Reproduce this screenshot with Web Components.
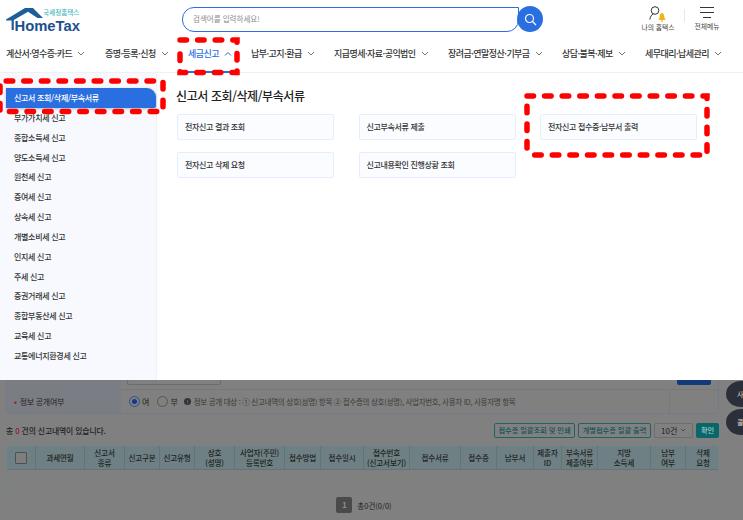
<!DOCTYPE html>
<html lang="ko">
<head>
<meta charset="utf-8">
<title>HomeTax</title>
<style>
  html, body { margin: 0; padding: 0; background: #fff; }
  body { width: 743px; height: 520px; overflow: hidden; position: relative;
         font-family: "Noto Sans CJK KR", "Noto Sans", sans-serif; color: #222; }
</style>
</head>
<body>
<ht-header></ht-header>
<ht-megamenu></ht-megamenu>
<ht-backdrop></ht-backdrop>
<ht-marks></ht-marks>

<script>
const FONT = '"Noto Sans CJK KR", "Noto Sans", sans-serif';

// top bar: logo, search, my hometax, all menu + the nav row
class HtHeader extends HTMLElement {
    constructor() {
        super();
        this.attachShadow({ mode: 'open' });
    }
    connectedCallback() {
        const nav = [
            ['계산서·영수증·카드', 99, false],
            ['증명·등록·신청', 83, false],
            ['세금신고', 63, true],
            ['납부·고지·환급', 83, false],
            ['지급명세·자료·공익법인', 114, false],
            ['장려금·연말정산·기부금', 114, false],
            ['상담·불복·제보', 83, false],
            ['세무대리·납세관리', 92, false]
        ];
        const items = nav.map(n => `
            <a class="${n[2] ? 'on' : ''}" style="width:${n[1]}px"><span>${n[0]}</span>
              <svg width="8" height="5" viewBox="0 0 8 5"><path d="${n[2] ? 'M1 4.500 4 1.500 7 4.500' : 'M1 1 4 4 7 1'}" fill="none" stroke="currentColor" stroke-width="1"/></svg>
            </a>`).join('');
        this.shadowRoot.innerHTML = `
        <style>
          :host { display: block; height: 73px; background: #fff; border-bottom: 1px solid #eef0f3; box-sizing: border-box; font-family: ${FONT}; }
          .top { display: flex; height: 38px; align-items: flex-start; }
          .logo { width: 182px; padding: 7px 0 0 6px; box-sizing: border-box; flex: none; }
          .logo svg { display: block; }
          .search { width: 337px; height: 25px; margin-top: 7px; border: 1.6px solid #2a6fe0; border-radius: 12px 0 12px 12px; box-sizing: border-box;
                    font-size: 7.500px; line-height: 21px; color: #8a8a8a; padding-left: 10px; flex: none; }
          .btn { width: 26px; height: 26px; margin: 6px 0 0 -2px; border-radius: 50%; background: #2a6fe0; flex: none;
                 display: flex; align-items: center; justify-content: center; }
          .my { margin-left: 96px; width: 38px; text-align: center; font-size: 6.800px; color: #444; flex: none; padding-top: 6px; line-height: 9px; white-space: nowrap; }
          .sep { width: 1px; height: 13px; background: #e5e7ea; margin: 9px 0 0 7px; flex: none; }
          .all { margin-left: 5px; width: 34px; text-align: center; font-size: 6.800px; color: #444; flex: none; padding-top: 7px; line-height: 9px; white-space: nowrap; }
          .my svg { display: block; margin: 0 auto 1px; }
          .all svg { display: block; margin: 0 auto 3px; }
          nav { display: flex; padding-left: 6px; height: 31px; align-items: center; white-space: nowrap; font-size: 9px; color: #333; }
          nav a { display: flex; flex: none; align-items: center; gap: 5px; font-weight: 500; letter-spacing: -.55px; position: relative; }
          nav a svg { color: #777; flex: none; }
          nav a.on, nav a.on svg { color: #2a6fe0; }
          nav a.on::after { content: ""; position: absolute; left: 0; width: 43px; top: 24px; height: 1.500px; background: #2a6fe0; }
        </style>
        <div class="top">
          <div class="logo">
            <svg width="76" height="26" viewBox="0 0 76 26">
              <path d="M0 12.500 19 1h8l10 10h-5.500L22 4.800 7.800 13v10H5.600V13.500H0z" fill="#1d5d99"/>
              <text x="37" y="8.200" font-size="6.600" font-weight="500" fill="#45b5c4" font-family='${FONT}'>국세청홈택스</text>
              <text x="8.500" y="24" font-size="15" font-weight="700" fill="#1d4f8f" font-family="Liberation Sans" textLength="65.500" lengthAdjust="spacingAndGlyphs">HomeTax</text>
            </svg>
          </div>
          <div class="search">검색어를 입력하세요!</div>
          <div class="btn"><svg width="13" height="13" viewBox="0 0 13 13"><circle cx="5.500" cy="5.500" r="4" fill="none" stroke="#fff" stroke-width="1.200"/><path d="M8.500 8.500 12 12" stroke="#fff" stroke-width="1.300"/></svg></div>
          <div class="my">
            <svg width="18" height="16" viewBox="0 0 18 16">
              <circle cx="6" cy="4.500" r="3.800" fill="none" stroke="#333" stroke-width="1"/>
              <path d="M.8 13.500c.5-3 2-4.800 3.500-5.500" fill="none" stroke="#333" stroke-width="1"/>
              <path d="M9.500 14c0-1 1.200-1 1.200-3.700 0-2 1.300-3.300 2.300-3.300s2.300 1.300 2.300 3.300c0 2.700 1.200 2.700 1.200 3.700z" fill="#f1b416"/>
              <rect x="12" y="14.500" width="2" height="1.200" fill="#f1b416"/>
            </svg>나의 홈택스</div>
          <div class="sep"></div>
          <div class="all">
            <svg width="14" height="12" viewBox="0 0 14 12"><path d="M0 .5h14M0 5.500h14M3 10.500h8" stroke="#333" stroke-width="1"/></svg>전체메뉴</div>
        </div>
        <nav>${items}</nav>`;
    }
}

// the open dropdown panel
class HtMegamenu extends HTMLElement {
    constructor() {
        super();
        this.attachShadow({ mode: 'open' });
    }
    connectedCallback() {
        const side = ['부가가치세 신고', '종합소득세 신고', '양도소득세 신고', '원천세 신고', '증여세 신고', '상속세 신고',
            '개별소비세 신고', '인지세 신고', '주세 신고', '증권거래세 신고', '종합부동산세 신고', '교육세 신고', '교통에너지환경세 신고'];
        const cards = ['전자신고 결과 조회', '신고부속서류 제출', '전자신고 접수증·납부서 출력', '전자신고 삭제 요청', '신고내용확인 진행상황 조회'];
        this.shadowRoot.innerHTML = `
        <style>
          :host { display: flex; height: 307px; background: #fff; font-family: ${FONT}; position: relative; z-index: 2; }
          aside { width: 157px; background: #f7f9fe; border-right: 1px solid #eef1f8; box-sizing: border-box; padding-top: 15px; flex: none; }
          .active { margin-left: 6px; height: 20px; background: #2a6fe0; color: #fff; border-radius: 0 9px 2px 0; font-size: 8px; letter-spacing: -.33px; line-height: 20px; padding-left: 8px; font-weight: 500; box-shadow: 0 1px 3px rgba(40,70,130,.35); }
          .item { font-size: 8px; letter-spacing: -.3px; height: 19.830px; line-height: 19.830px; padding-left: 14px; color: #333; font-weight: 500; }
          main { flex: 1; padding: 14px 0 0 20px; }
          h2 { margin: 0 0 9px -1px; font-size: 12px; letter-spacing: -.4px; font-weight: 500; line-height: 18px; color: #222; }
          .grid { display: grid; grid-template-columns: repeat(3, 157px); column-gap: 24.500px; row-gap: 12px; }
          .card { height: 26px; background: #fbfcff; border: 1px solid #e6edfb; border-radius: 2px; box-sizing: border-box; font-size: 8px; letter-spacing: -.35px; line-height: 24px; padding-left: 7px; color: #333; font-weight: 500; }
        </style>
        <aside>
          <div class="active">신고서 조회/삭제/부속서류</div>
          ${side.map(s => `<div class="item">${s}</div>`).join('')}
        </aside>
        <main>
          <h2>신고서 조회/삭제/부속서류</h2>
          <div class="grid">${cards.map(c => `<div class="card">${c}</div>`).join('')}</div>
        </main>`;
    }
}

// dimmed page under the menu: the search form tail, the buttons and the table
class HtBackdrop extends HTMLElement {
    constructor() {
        super();
        this.attachShadow({ mode: 'open' });
    }
    connectedCallback() {
        const heads = [['과세연월', 49], ['신고서<br>종류', 40], ['신고구분', 35], ['신고유형', 35], ['상호<br>(성명)', 40], ['사업자(주민)<br>등록번호', 50],
            ['접수방법', 36], ['접수일시', 43], ['접수번호<br>(신고서보기)', 46], ['접수서류', 51], ['접수증', 36], ['납부서', 37], ['제출자<br>ID', 28],
            ['부속서류<br>제출여부', 36], ['지방<br>소득세', 53], ['납부<br>여부', 35], ['삭제<br>요청', 35]];
        this.shadowRoot.innerHTML = `
        <style>
          :host { display: block; height: 140px; background: #808080; font-family: ${FONT}; color: #1f1f1f; position: relative; font-size: 8px; overflow: hidden; }
          .form { margin-left: 6px; width: 713px; height: 34px; border: 1px solid #767a88; border-top: 0; border-radius: 0 0 5px 5px; box-sizing: border-box;
                  display: grid; grid-template-columns: 114px 548px 1fr; grid-template-rows: 9px 1fr; overflow: hidden; }
          .lbl { background: #7b7d84; }
          .lbl.txt { padding-left: 7px; display: flex; align-items: center; gap: 3px; letter-spacing: -.3px; }
          .lbl i { color: #9c1a2c; font-style: normal; font-weight: 700; }
          .inp { width: 94px; height: 5px; margin-left: 6px; border: 1px solid #6c6c6c; border-top: 0; border-radius: 0 0 2px 2px; box-sizing: border-box; }
          .blue { width: 34px; height: 5px; margin-left: 8px; background: #123a7a; border-radius: 0 0 2px 2px; }
          .val { display: flex; align-items: center; padding-left: 8px; white-space: nowrap; border-top: 1px solid #787878; }
          .end { border-top: 1px solid #787878; border-left: 1px solid #787878; }
          .radio { width: 11px; height: 11px; border: 1px solid #555; border-radius: 50%; box-sizing: border-box; flex: none; margin-right: 2px; }
          .radio.on { border-color: #2c4f90; position: relative; }
          .radio.on::after { content: ""; position: absolute; inset: 2px; background: #123a8c; border-radius: 50%; }
          .pick { margin-right: 8px; }
          .pick.last { margin-right: 6px; }
          .info { font-size: 7.500px; letter-spacing: -.3px; color: #3a3a3a; display: flex; align-items: center; gap: 3px; }
          .info b { width: 7px; height: 7px; border-radius: 50%; background: #333; color: #808080; font-size: 5px; line-height: 7px; text-align: center; }
          .row { display: flex; height: 31px; align-items: center; margin-left: 6px; width: 713px; gap: 3px; padding-top: 1px; box-sizing: border-box; }
          .count { flex: 1; font-weight: 500; font-size: 7.800px; letter-spacing: -.1px; }
          .count em { color: #8c1a1a; font-style: normal; }
          .tbtn { height: 15px; border: 1px solid #1f6368; border-radius: 2px; color: #0f5357; font-size: 7.200px; line-height: 13px; text-align: center; box-sizing: border-box; font-weight: 500; white-space: nowrap; }
          .sel { width: 39px; height: 15px; border: 1px solid #6d6d6d; border-radius: 2px; font-size: 8px; padding: 0 6px; box-sizing: border-box; display: flex; align-items: center; justify-content: space-between; }
          .ok { background: #0b666a; color: #9cc; border: 0; line-height: 15px; }
          .tbl { width: 713px; margin-left: 6px; border: 1px solid #758585; border-radius: 2px; box-sizing: border-box; height: 45px; }
          .hd { display: flex; height: 23px; background: #6e8083; border-bottom: 1px solid #617576; box-sizing: content-box; }
          .hd div { box-sizing: border-box; border-left: 1px solid #617576; display: flex; align-items: center; justify-content: center; text-align: center; font-size: 7.500px; line-height: 9.500px; font-weight: 500; white-space: nowrap; letter-spacing: -.1px; flex: none; }
          .hd div:first-child { border-left: 0; }
          .chk { width: 10px; height: 10px; background: #7e7e7e; border: 1px solid #505050; border-radius: 1px; }
          .pg { display: flex; justify-content: center; align-items: center; gap: 5px; width: 713px; margin: 7px 0 0 6px; font-size: 7.500px; padding-left: 3px; box-sizing: border-box; }
          .pg b { width: 16px; height: 16px; background: #4a4a4a; color: #909090; text-align: center; line-height: 16px; border-radius: 2px; }
          .side { position: absolute; left: 726px; width: 30px; height: 26px; border-radius: 50%; background: #2a2f3a; color: #ddd; font-size: 7px; line-height: 26px; padding-left: 11px; box-sizing: border-box; }
        </style>
        <div class="form">
          <div class="lbl"></div>
          <div><div class="inp"></div></div>
          <div><div class="blue"></div></div>
          <div class="lbl txt"><i>•</i> 정보 공개여부</div>
          <div class="val">
            <span class="radio on"></span><span class="pick">여</span>
            <span class="radio"></span><span class="pick last">부</span>
            <span class="info"><b>!</b> 정보 공개 대상 : ① 신고내역의 상호(성명) 항목 ② 접수증의 상호(성명), 사업자번호, 사용자 ID, 사용자명 항목</span>
          </div>
          <div class="end"></div>
        </div>
        <div class="row">
          <span class="count">총 <em>0</em> 건의 신고내역이 있습니다.</span>
          <span class="tbtn" style="width:81px">접수증 일괄조회 및 인쇄</span>
          <span class="tbtn" style="width:73px">개별접수증 일괄 출력</span>
          <span class="sel">10건<svg width="6" height="4" viewBox="0 0 6 4"><path d="M1 1 3 3 5 1" fill="none" stroke="#444" stroke-width=".9"/></svg></span>
          <span class="tbtn ok" style="width:23px">확인</span>
        </div>
        <div class="tbl">
          <div class="hd">
            <div style="width:28px"><span class="chk"></span></div>
            ${heads.map(h => `<div style="width:${h[1]}px">${h[0]}</div>`).join('')}
          </div>
        </div>
        <div class="pg"><b>1</b><span>총0건(0/0)</span></div>
        <div class="side" style="top:1px">사</div>
        <div class="side" style="top:29px">콜</div>`;
    }
}

// red dashed annotations drawn over the screenshot
class HtMarks extends HTMLElement {
    constructor() {
        super();
        this.attachShadow({ mode: 'open' });
    }
    connectedCallback() {
        this.shadowRoot.innerHTML = `
        <style>
          :host { display: block; position: absolute; left: 0; top: 0; width: 743px; height: 520px; pointer-events: none; z-index: 5; }
          svg { display: block; }
          path { fill: none; stroke: #f00; stroke-width: 5.500; stroke-linecap: round; stroke-dasharray: 6.500 11.100; }
        </style>
        <svg width="743" height="520">
          <path d="M180 40H237V72.500H180V44"/>
          <path d="M0 110V81H163V111.500H6"/>
          <path d="M527 96H707V155H529M527 148V104"/>
        </svg>`;
    }
}

customElements.define('ht-header', HtHeader);
customElements.define('ht-megamenu', HtMegamenu);
customElements.define('ht-backdrop', HtBackdrop);
customElements.define('ht-marks', HtMarks);
</script>
</body>
</html>
